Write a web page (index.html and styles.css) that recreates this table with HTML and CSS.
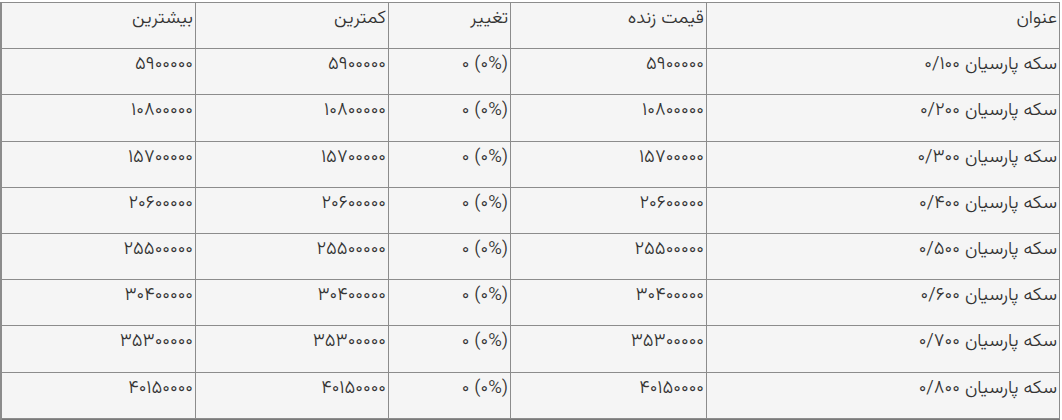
FILE: index.html
```html
<!DOCTYPE html>
<html lang="fa" dir="rtl">
<head>
<meta charset="utf-8">
<title>قیمت سکه پارسیان</title>
<link rel="stylesheet" href="styles.css">
</head>
<body>
<table class="prices">
  <colgroup>
    <col class="c-title"><col class="c-live"><col class="c-change"><col class="c-min"><col class="c-max">
  </colgroup>
  <tr><td>عنوان</td><td>قیمت زنده</td><td>تغییر</td><td>کمترین</td><td>بیشترین</td></tr>
  <tr><td>سکه پارسیان ۰/۱۰۰</td><td>۵۹۰۰۰۰۰</td><td>(۰%) ۰</td><td>۵۹۰۰۰۰۰</td><td>۵۹۰۰۰۰۰</td></tr>
  <tr><td>سکه پارسیان ۰/۲۰۰</td><td>۱۰۸۰۰۰۰۰</td><td>(۰%) ۰</td><td>۱۰۸۰۰۰۰۰</td><td>۱۰۸۰۰۰۰۰</td></tr>
  <tr><td>سکه پارسیان ۰/۳۰۰</td><td>۱۵۷۰۰۰۰۰</td><td>(۰%) ۰</td><td>۱۵۷۰۰۰۰۰</td><td>۱۵۷۰۰۰۰۰</td></tr>
  <tr><td>سکه پارسیان ۰/۴۰۰</td><td>۲۰۶۰۰۰۰۰</td><td>(۰%) ۰</td><td>۲۰۶۰۰۰۰۰</td><td>۲۰۶۰۰۰۰۰</td></tr>
  <tr><td>سکه پارسیان ۰/۵۰۰</td><td>۲۵۵۰۰۰۰۰</td><td>(۰%) ۰</td><td>۲۵۵۰۰۰۰۰</td><td>۲۵۵۰۰۰۰۰</td></tr>
  <tr><td>سکه پارسیان ۰/۶۰۰</td><td>۳۰۴۰۰۰۰۰</td><td>(۰%) ۰</td><td>۳۰۴۰۰۰۰۰</td><td>۳۰۴۰۰۰۰۰</td></tr>
  <tr><td>سکه پارسیان ۰/۷۰۰</td><td>۳۵۳۰۰۰۰۰</td><td>(۰%) ۰</td><td>۳۵۳۰۰۰۰۰</td><td>۳۵۳۰۰۰۰۰</td></tr>
  <tr><td>سکه پارسیان ۰/۸۰۰</td><td>۴۰۱۵۰۰۰۰</td><td>(۰%) ۰</td><td>۴۰۱۵۰۰۰۰</td><td>۴۰۱۵۰۰۰۰</td></tr>
</table>
<table class="prices next">
  <colgroup>
    <col class="n-title"><col class="n-live"><col class="n-change"><col class="n-min"><col class="n-max">
  </colgroup>
  <tr><td>&nbsp;</td><td>&nbsp;</td><td>&nbsp;</td><td>&nbsp;</td><td>&nbsp;</td></tr>
</table>
</body>
</html>
```
FILE: styles.css
```css
html, body {
  margin: 0;
  padding: 0;
  background: #ffffff;
}
body {
  padding: 2px 2px 0 1px;
  font-family: "Vazirmatn", "Noto Sans Arabic", "DejaVu Sans", sans-serif;
  font-size: 18.5px;
  font-weight: 300;
  color: #333333;
}
.prices {
  width: 1059px;
  table-layout: fixed;
  border-collapse: collapse;
  background: #f5f5f5;
  border: 1px solid #8c8c8c;
  border-left-width: 2px;
}
.prices tr {
  height: 46.2px;
}
.prices td {
  border: 1px solid #8c8c8c;
  padding: 3px 2px 0 0;
  text-align: right;
  vertical-align: top;
  line-height: 26px;
  white-space: nowrap;
}
.c-title { width: 353px; }
.c-live { width: 196px; }
.c-change { width: 122px; }
.c-min { width: 193px; }
.c-max { width: 195px; }
.next {
  border-top: 2px solid #7a7a7a;
}
.n-title { width: 355px; }
.n-live { width: 195px; }
.n-change { width: 128px; }
.n-min { width: 189px; }
.n-max { width: 192px; }
```
